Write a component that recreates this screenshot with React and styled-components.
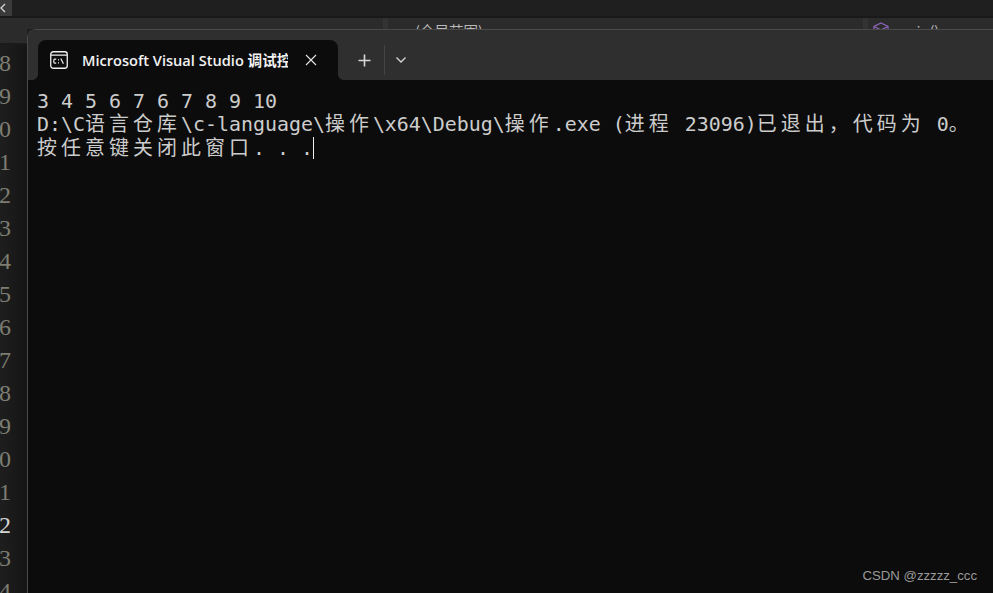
import styled, { createGlobalStyle } from "styled-components";

const GlobalStyle = createGlobalStyle`
  html, body {
    margin: 0;
    padding: 0;
    background: #1f1f1f;
  }
  body {
    width: 993px;
    height: 593px;
    overflow: hidden;
  }
`;

const Page = styled.div`
  display: flex;
  flex-direction: column;
  width: 993px;
  height: 593px;
  overflow: hidden;
  background: #1f1f1f;
`;

const MenuBar = styled.div`
  display: flex;
  height: 16px;
  background: #1f1f1f;
  border-bottom: 2px solid #191919;
`;

const CloseTab = styled.div`
  display: flex;
  align-items: center;
  width: 12px;
  background: #3a3a3a;
  color: #c8c8c8;
`;

const ScopeBar = styled.div`
  display: flex;
  height: 11px;
  overflow: hidden;
  background: #2b2b2b;
`;

const ScopeCell = styled.div`
  flex: none;
  display: flex;
  align-items: flex-start;
  gap: 6px;
  box-sizing: border-box;
  width: ${(p) => p.$width}px;
  height: 30px;
  padding-left: ${(p) => p.$pad || 0}px;
  padding-top: 4px;
  border-right: ${(p) => (p.$divider ? "5px solid #333" : "none")};
  color: #b9b9b9;
  font-family: "Noto Sans CJK SC", sans-serif;
  font-size: 14.5px;
  line-height: 18px;
`;

const Main = styled.div`
  display: flex;
  flex: 1;
  min-height: 0;
`;

const Gutter = styled.div`
  flex: none;
  width: 27px;
  overflow: hidden;
  background: linear-gradient(to right, #1e1e1e, #151515);
`;

const GutterHead = styled.div`
  height: 14px;
  margin-bottom: 2px;
  background: #2b2b2b;
  box-shadow: 0 2px 0 #1a1a1a;
`;

const LineNumber = styled.div`
  display: flex;
  justify-content: flex-end;
  width: 11px;
  height: 33px;
  overflow: hidden;
  color: ${(p) => (p.$active ? "#d4d4d4" : "#7d7d72")};
  font-family: "Liberation Serif", serif;
  font-size: 24px;
  line-height: 37px;
`;

const Terminal = styled.div`
  flex: 1;
  display: flex;
  flex-direction: column;
  min-width: 0;
  margin-right: -12px;
  border-top: 1px solid #4a4a4a;
  border-left: 1px solid #4a4a4a;
  border-top-left-radius: 9px;
  overflow: hidden;
  background: #0c0c0c;
`;

const TabStrip = styled.div`
  flex: none;
  display: flex;
  height: 50px;
  box-sizing: border-box;
  padding: 10px 0 0 10px;
  background: #2f2f2f;
`;

const Tab = styled.div`
  position: relative;
  display: flex;
  align-items: center;
  width: 300px;
  box-sizing: border-box;
  padding: 0 0 0 12px;
  background: #0c0c0c;
  border-radius: 8px 8px 0 0;

  &::before,
  &::after {
    content: "";
    position: absolute;
    bottom: 0;
    width: 6px;
    height: 6px;
  }
  &::before {
    left: -6px;
    background: radial-gradient(circle at 0 0, transparent 5.5px, #0c0c0c 6.5px);
  }
  &::after {
    right: -6px;
    background: radial-gradient(circle at 100% 0, transparent 5.5px, #0c0c0c 6.5px);
  }
`;

const TabTitle = styled.div`
  width: 206px;
  margin-left: 14px;
  margin-bottom: 2px;
  overflow: hidden;
  white-space: nowrap;
  color: #f2f2f2;
  font-family: "Open Sans", "Noto Sans CJK SC", sans-serif;
  font-size: 14.6px;
  font-weight: 600;
`;

const TabClose = styled.div`
  display: flex;
  margin-left: 17px;
`;

const TabAction = styled.div`
  display: flex;
  align-items: center;
  justify-content: center;
  box-sizing: border-box;
  width: ${(p) => p.$width}px;
  height: 30px;
  margin-top: 5px;
  padding-left: ${(p) => p.$pad || 0}px;
  border-left: ${(p) => (p.$divider ? "1px solid #444" : "none")};
`;

const Output = styled.div`
  flex: 1;
  padding: 9.5px 0 0 9px;
  color: #cccccc;
  font-family: "DejaVu Sans Mono", "Noto Sans CJK SC", monospace;
  font-size: 19.93px;
  line-height: 23.5px;
  white-space: pre;
`;

const OutputLine = styled.div`
  height: 23.5px;
  display: flex;
  align-items: center;
`;

const Wide = styled.span`
  letter-spacing: 4.07px;
`;

const Cursor = styled.span`
  display: inline-block;
  width: 1px;
  height: 22px;
  background: #f2f2f2;
`;

const Watermark = styled.div`
  position: absolute;
  right: 16px;
  bottom: 8px;
  color: #9a9a9a;
  font-family: "Liberation Sans", sans-serif;
  font-size: 13.2px;
  line-height: 18px;
`;

const lineNumbers = ["8", "9", "0", "1", "2", "3", "4", "5", "6", "7", "8", "9", "0", "1", "2", "3", "4"];

const outputLines = [
  "3 4 5 6 7 6 7 8 9 10",
  "D:\\C语言仓库\\c-language\\操作\\x64\\Debug\\操作.exe (进程 23096)已退出，代码为 0。",
];

// the console gives CJK glyphs two full cells
function cells(text) {
  return text.split(/([\u3000-\u9fff\uff00-\uffef]+)/).map((part, i) =>
    i % 2 ? <Wide key={i}>{part}</Wide> : <span key={i}>{part}</span>
  );
}

function ConsoleIcon() {
  return (
    <svg width="18" height="18" viewBox="0 0 18 18" fill="none">
      <rect x="0.75" y="0.75" width="16.5" height="16.5" rx="2.5" stroke="#f2f2f2" strokeWidth="1.3" />
      <path d="M1 4.2h16" stroke="#f2f2f2" strokeWidth="1.3" />
      <path d="M6.2 8.2H4.8c-.7 0-1 .5-1 1.2v1.6c0 .7.3 1.2 1 1.2h1.4" stroke="#f2f2f2" strokeWidth="1.2" />
      <path d="M8 8.8h1M8 11.8h1" stroke="#f2f2f2" strokeWidth="1.2" />
      <path d="M10.8 7.6l2.6 5.2" stroke="#f2f2f2" strokeWidth="1.2" />
    </svg>
  );
}

function App() {
  return (
    <Page>
      <GlobalStyle />
      <MenuBar>
        <CloseTab>
          <svg width="8" height="12" viewBox="0 0 8 12" fill="none">
            <path d="M5 2L1 6l4 4" stroke="#d0d0d0" strokeWidth="1.4" />
          </svg>
        </CloseTab>
      </MenuBar>
      <ScopeBar>
        <ScopeCell $width={388} $divider />
        <ScopeCell $width={480} $pad={27} $divider>(全局范围)</ScopeCell>
        <ScopeCell $width={125} $pad={5}>
          <svg width="16" height="16" viewBox="0 0 16 16" fill="none">
            <path d="M8 1l7 3.5v7L8 15l-7-3.5v-7z M1 4.5L8 8l7-3.5" stroke="#8a62b8" strokeWidth="1.3" />
          </svg>
          main()
        </ScopeCell>
      </ScopeBar>
      <Main>
        <Gutter>
          <GutterHead />
          {lineNumbers.map((n, i) => (
            <LineNumber key={i} $active={i === 14}>{n}</LineNumber>
          ))}
        </Gutter>
        <Terminal>
          <TabStrip>
            <Tab>
              <ConsoleIcon />
              <TabTitle>Microsoft Visual Studio 调试控制台</TabTitle>
              <TabClose>
                <svg width="12" height="12" viewBox="0 0 12 12" fill="none">
                  <path d="M1 1l10 10M11 1L1 11" stroke="#e6e6e6" strokeWidth="1.1" />
                </svg>
              </TabClose>
            </Tab>
            <TabAction $width={46} $pad={6}>
              <svg width="13" height="13" viewBox="0 0 13 13" fill="none">
                <path d="M6.5 0.5v12M0.5 6.5h12" stroke="#d8d8d8" strokeWidth="1.6" />
              </svg>
            </TabAction>
            <TabAction $width={33} $divider>
              <svg width="12" height="8" viewBox="0 0 12 8" fill="none">
                <path d="M1.5 1.5L6 6l4.5-4.5" stroke="#d8d8d8" strokeWidth="1.3" />
              </svg>
            </TabAction>
          </TabStrip>
          <Output>
            {outputLines.map((line) => (
              <OutputLine key={line}>{cells(line)}</OutputLine>
            ))}
            <OutputLine>
              {cells("按任意键关闭此窗口")}
              <span>. . .</span>
              <Cursor />
            </OutputLine>
          </Output>
        </Terminal>
      </Main>
      <Watermark>CSDN @zzzzz_ccc</Watermark>
    </Page>
  );
}

export default App;
